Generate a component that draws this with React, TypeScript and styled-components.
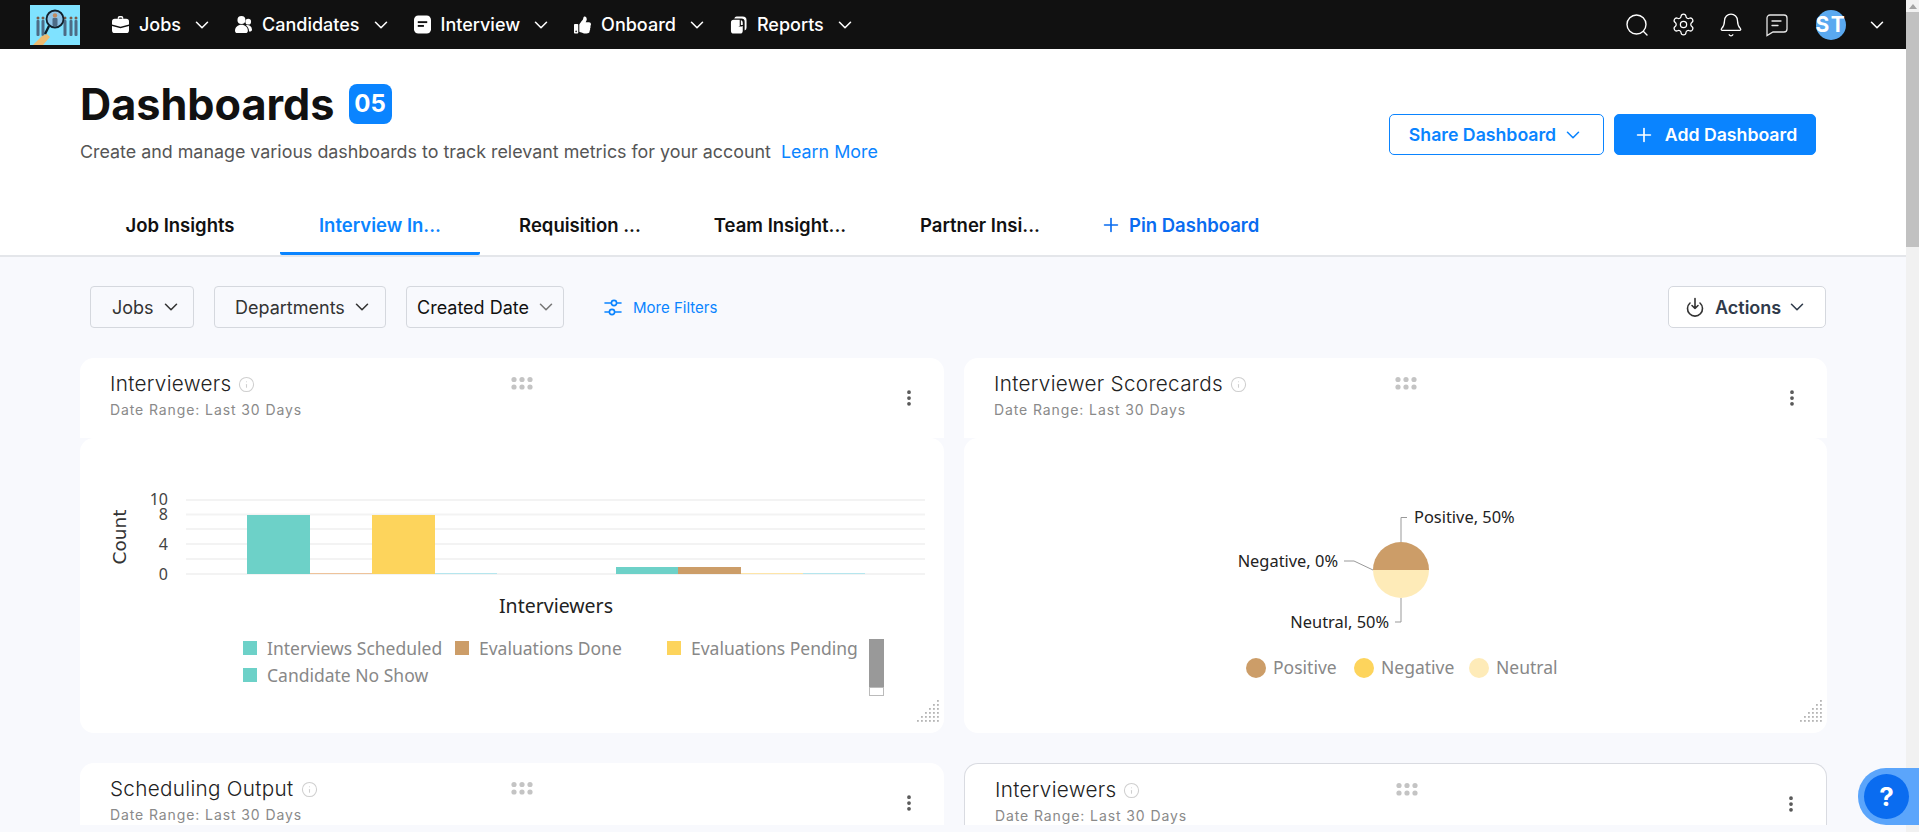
import React from "react";
import styled, { createGlobalStyle } from "styled-components";
import { ChevronDown, Plus, Settings, Bell, Info, EllipsisVertical } from "lucide-react";
import { FaThumbsUp } from "react-icons/fa";

const GlobalStyle = createGlobalStyle`
  html, body {
    margin: 0;
    height: 100%;
    overflow: hidden;
    background: #f8f9fd;
    font-family: Inter, "Liberation Sans", sans-serif;
  }
  * { box-sizing: border-box; }
`;

const Shell = styled.div`
  display: flex;
  width: 1919px;
  height: 832px;
`;

const Main = styled.div`
  flex: 1;
  min-width: 0;
  height: 825px;
  overflow: hidden;
`;

const Scrollbar = styled.div`
  width: 13px;
  background: #f1f1f1;
  display: flex;
  flex-direction: column;
  align-items: center;
`;

const ScrollArrow = styled.div`
  width: 0;
  height: 0;
  margin: 4px 0 3px;
  border-left: 4px solid transparent;
  border-right: 4px solid transparent;
  border-bottom: 5px solid #a3a3a3;
`;

const ScrollThumb = styled.div`
  width: 100%;
  height: 235px;
  background: #c1c1c1;
`;

const TopBar = styled.header`
  height: 49px;
  background: #111111;
  display: flex;
  align-items: center;
  padding: 0 18px 0 30px;
  color: #fff;
`;

const Logo = styled.svg`
  width: 50px;
  height: 40px;
  margin-right: 32px;
  flex: none;
`;

const NavList = styled.nav`
  display: flex;
  align-items: center;
  gap: 22px;
`;

const NavItem = styled.div`
  display: flex;
  align-items: center;
  gap: 10px;
  font-size: 18px;
  font-weight: 500;
`;

const NavChevron = styled(ChevronDown)`
  width: 22px;
  height: 22px;
  stroke-width: 1.7;
`;

const NavIcon = styled.span`
  width: 17px;
  height: 20px;
  display: flex;
  align-items: center;
  justify-content: center;
`;

const TopActions = styled.div`
  margin-left: auto;
  display: flex;
  align-items: center;
  gap: 22px;
`;

const Avatar = styled.div`
  width: 30px;
  height: 30px;
  border-radius: 50%;
  background: #5aa9f0;
  display: flex;
  align-items: center;
  justify-content: center;
  font-size: 21px;
  font-weight: 700;
  letter-spacing: 1.5px;
  margin: 0 -2px 0 6px;
`;

const Heading = styled.section`
  background: #fff;
  height: 208px;
  display: flex;
  flex-direction: column;
  border-bottom: 2px solid #e4e6ea;
`;

const HeadingRow = styled.div`
  display: flex;
  justify-content: space-between;
  align-items: center;
  height: 143px;
  padding: 0 90px 0 80px;
`;

const TitleRow = styled.div`
  display: flex;
  align-items: center;
  gap: 14px;
`;

const Title = styled.h1`
  margin: 0;
  font-size: 43.2px;
  line-height: 50px;
  font-weight: 700;
  color: #111;
`;

const CountBadge = styled.span`
  width: 43px;
  height: 40px;
  border-radius: 8px;
  background: #0a84ff;
  color: #fff;
  display: flex;
  align-items: center;
  justify-content: center;
  font-size: 24px;
  font-weight: 700;
`;

const Subtitle = styled.p`
  margin: 12px 0 0;
  font-size: 17.87px;
  line-height: 22px;
  color: #555;
`;

const BlueLink = styled.a`
  color: #0a84ff;
  margin-left: 10px;
`;

const ButtonRow = styled.div`
  display: flex;
  gap: 10px;
  margin-top: 28px;
`;

const Button = styled.button<{ $solid?: boolean; $w: number }>`
  width: ${(p) => p.$w}px;
  height: 41px;
  border-radius: 5px;
  border: 1px solid #0a84ff;
  background: ${(p) => (p.$solid ? "#0a84ff" : "#fff")};
  color: ${(p) => (p.$solid ? "#fff" : "#0a84ff")};
  font-family: inherit;
  font-size: 17.7px;
  font-weight: 600;
  display: flex;
  align-items: center;
  justify-content: center;
  gap: ${(p) => (p.$solid ? "10px" : "6px")};
  padding: 0;
`;

const Tabs = styled.div`
  display: flex;
  align-items: stretch;
  height: 63px;
  padding-left: 80px;
`;

const Tab = styled.div<{ $active?: boolean }>`
  width: 200px;
  padding-top: 6px;
  display: flex;
  align-items: center;
  justify-content: center;
  font-size: 18.5px;
  font-weight: 600;
  color: ${(p) => (p.$active ? "#0a84ff" : "#111")};
  border-bottom: 3px solid ${(p) => (p.$active ? "#0a84ff" : "transparent")};
  border-radius: 0 0 2px 2px;
`;

const PinTab = styled.div`
  display: flex;
  align-items: center;
  gap: 7px;
  padding: 3px 0 0;
  margin-left: 20px;
  font-size: 18.5px;
  font-weight: 600;
  color: #0a6cf0;
`;

const Filters = styled.div`
  display: flex;
  align-items: center;
  height: 42px;
  margin: 29px 80px 30px 90px;
  gap: 20px;
`;

const FilterButton = styled.div<{ $w: number; $pad: number; $dark?: boolean }>`
  width: ${(p) => p.$w}px;
  height: 42px;
  display: flex;
  align-items: center;
  gap: 6px;
  padding-left: ${(p) => p.$pad}px;
  border: 1px solid #d5d8de;
  border-radius: 4px;
  font-size: 18px;
  color: ${(p) => (p.$dark ? "#111" : "#333")};
`;

const MoreFilters = styled.div`
  display: flex;
  align-items: center;
  gap: 11px;
  margin-left: 20px;
  font-size: 15px;
  color: #0a84ff;
`;

const ActionsButton = styled.div`
  margin-left: auto;
  width: 158px;
  height: 42px;
  display: flex;
  align-items: center;
  gap: 5px;
  padding-left: 16px;
  background: #fff;
  border: 1px solid #d5d8de;
  border-radius: 5px;
  font-size: 18px;
  font-weight: 600;
  color: #2f3a4a;
`;

const ActionsGlyph = styled.svg`
  width: 20px;
  height: 20px;
  margin-right: 5px;
`;

const Grid = styled.div`
  display: grid;
  grid-template-columns: 864px 863px;
  column-gap: 20px;
  row-gap: 30px;
  padding-left: 80px;
`;

const Widget = styled.div`
  display: flex;
  flex-direction: column;
`;

const CardHead = styled.div<{ $outlined?: boolean }>`
  position: relative;
  height: 80px;
  background: #fff;
  border-radius: 14px 14px 0 0;
  padding: 13px 30px 0;
  border: ${(p) => (p.$outlined ? "1px solid #d9dbe1" : "none")};
  border-bottom: none;
`;

const CardTitle = styled.div`
  display: flex;
  align-items: center;
  gap: 7px;
  font-size: 20.7px;
  font-weight: 300;
  letter-spacing: 0.3px;
  line-height: 26px;
  color: #222;
`;

const InfoIcon = styled(Info)`
  width: 17px;
  height: 17px;
  color: #cfcfcf;
`;

const CardDate = styled.div`
  margin-top: 2px;
  font-size: 14px;
  line-height: 22px;
  letter-spacing: 0.9px;
  color: #8a8a8a;
`;

const DragDots = styled.svg`
  position: absolute;
  top: 18px;
  left: 431px;
  width: 22px;
  height: 16px;
`;

const MoreButton = styled(EllipsisVertical)`
  position: absolute;
  top: 30px;
  right: 25px;
  width: 20px;
  height: 20px;
  color: #555;
`;

const CardBody = styled.div`
  position: relative;
  height: 295px;
  background: #fff;
  border-radius: 14px;
`;

const ChartSvg = styled.svg`
  display: block;
  width: 100%;
  height: 100%;
`;

const ResizeDots = styled.svg`
  position: absolute;
  right: 4px;
  bottom: 10px;
  width: 25px;
  height: 25px;
`;

const HelpBubble = styled.div`
  position: fixed;
  left: 1858px;
  top: 768px;
  width: 61px;
  height: 57px;
  background: #5ba5fb;
  border-radius: 28px 0 0 28px;
  display: flex;
  align-items: center;
  padding-left: 6px;
`;

const HelpDot = styled.div`
  width: 45px;
  height: 45px;
  border-radius: 50%;
  background: #0a6cf0;
  color: #fff;
  font-size: 26px;
  font-weight: 700;
  display: flex;
  align-items: center;
  justify-content: center;
`;

const noto = '"Noto Sans", sans-serif';

const IconJobs = () => (
  <svg width="17" height="19" viewBox="0 0 18 20" fill="#fff">
    <path d="M6 4V3a2 2 0 0 1 2-2h2a2 2 0 0 1 2 2v1h-1.5V3a.5.5 0 0 0-.5-.5H8a.5.5 0 0 0-.5.5v1z" />
    <path d="M3 4h12a3 3 0 0 1 3 3v3L9 12.5 0 10V7a3 3 0 0 1 3-3z" />
    <path d="M0 11.5 9 14l9-2.5V16a3 3 0 0 1-3 3H3a3 3 0 0 1-3-3z" />
  </svg>
);

const IconCandidates = () => (
  <svg width="18" height="19" viewBox="0 0 18 19" fill="#fff">
    <circle cx="6.8" cy="4.8" r="4.2" />
    <path d="M0 16c0-3.6 3-6.2 6.8-6.2s6.8 2.6 6.8 6.2c0 1.6-1 2.6-2.4 2.6H2.4C1 18.6 0 17.6 0 16z" />
    <circle cx="14" cy="6.5" r="3" />
    <path d="M11.5 10.3a5 5 0 0 1 6.5 4.4c0 1.4-.8 2.3-2.6 2.3h-.5c0-2.6-1.2-5-3.4-6.7z" />
  </svg>
);

const IconInterview = () => (
  <svg width="17" height="19" viewBox="0 0 18 20">
    <rect x="0" y="0.5" width="18" height="19" rx="4.5" fill="#fff" />
    <rect x="4" y="6.5" width="10" height="2" fill="#111" />
    <rect x="4" y="10.5" width="6.5" height="2" fill="#111" />
  </svg>
);

const IconReports = () => (
  <svg width="18" height="20" viewBox="0 0 18 20" fill="#fff">
    <path d="M7 1h6.5A4 4 0 0 1 17.5 5v8a3 3 0 0 1-2 2.8V6.5A3.5 3.5 0 0 0 12 3H4.5A3 3 0 0 1 7 1z" />
    <path d="M4 4.5h6.3V11h-1.500a5 5 0 0 0 4.700 0v5a3 3 0 0 1-3 3H4a3 3 0 0 1-3-3V7.500a3 3 0 0 1 3-3z" />
    <path d="M11.5 4.6A3 3 0 0 1 13.5 7.5V10h-2z" />
  </svg>
);

const IconSearch = () => (
  <svg width="24" height="24" viewBox="0 0 24 24" fill="none" stroke="#fff" strokeWidth="1.4">
    <circle cx="11.5" cy="11.5" r="9.5" />
    <path d="M18.5 18.5 22 22" strokeLinecap="round" />
  </svg>
);

const IconChat = () => (
  <svg width="22" height="24" viewBox="0 0 22 24" fill="none" stroke="#e6e6e6" strokeWidth="1.3">
    <path d="M4 2h14a3 3 0 0 1 3 3v11a3 3 0 0 1-3 3H7l-6 3.5V5a3 3 0 0 1 3-3z" />
    <path d="M6 8h9M6 12.5h6" strokeLinecap="round" />
  </svg>
);

const IconFilters = () => (
  <svg width="18" height="17" viewBox="0 0 18 17" fill="none" stroke="#0a84ff" strokeWidth="1.6">
    <path d="M1 4h6M13 4h4M1 13h4M11 13h6" strokeLinecap="round" />
    <circle cx="10" cy="4" r="2.6" />
    <circle cx="8" cy="13" r="2.6" />
  </svg>
);

const IconActions = () => (
  <ActionsGlyph viewBox="0 0 20 20" fill="none" stroke="#333" strokeWidth="1.6" strokeLinecap="round" strokeLinejoin="round">
    <path d="M5 6a7.5 7.5 0 1 0 10 0" />
    <path d="M10 1.5v10M7 8.5l3 3 3-3" />
  </ActionsGlyph>
);

const drag = (
  <DragDots viewBox="0 0 22 16" fill="#c4c4c4">
    {[3, 11, 19].map((x) => (
      <React.Fragment key={x}>
        <circle cx={x} cy="3.5" r="2.6" />
        <circle cx={x} cy="11" r="2.6" />
      </React.Fragment>
    ))}
  </DragDots>
);

const resize = (
  <ResizeDots viewBox="0 0 25 25" fill="#b5b5b5">
    {[0, 1, 2, 3, 4, 5].flatMap((row) =>
      [0, 1, 2, 3, 4, 5].map((col) =>
        col + row >= 5 ? <rect key={`${row}-${col}`} x={col * 4 + 2} y={row * 4 + 2} width="1.8" height="1.8" /> : null,
      ),
    )}
  </ResizeDots>
);

function BarChart() {
  // coordinates inside the 864x295 card body
  const toX = (x: number) => x - 80;
  const toY = (y: number) => y - 438;
  const grid = [500, 514.5, 529, 544, 559, 574];
  const labels: [string, number][] = [["10", 499], ["8", 514], ["4", 544], ["0", 574]];
  const bars = [
    [247, 310, 515, "#6dd1c8"],
    [310, 372, 573, "#eec39a"],
    [372, 435, 515, "#fdd45c"],
    [435, 497, 573, "#b5e6ee"],
    [616, 678, 567, "#6dd1c8"],
    [678, 741, 567, "#cc9d68"],
    [741, 803, 573, "#fee5a8"],
    [803, 865, 573, "#b5e6ee"],
  ] as const;
  const legend = [
    [243, 648, "#6dd1c8", "Interviews Scheduled"],
    [455, 648, "#cc9d68", "Evaluations Done"],
    [667, 648, "#fdd45c", "Evaluations Pending"],
    [243, 675, "#6dd1c8", "Candidate No Show"],
  ] as const;
  return (
    <ChartSvg viewBox="0 0 864 295">
      {grid.map((y) => (
        <rect key={y} x={toX(186)} y={toY(y) - 1} width="739" height="2" fill="#f3f3f3" />
      ))}
      {labels.map(([t, y]) => (
        <text key={t} x={toX(168)} y={toY(y) + 6} textAnchor="end" fontFamily={noto} fontSize="16" fill="#444">
          {t}
        </text>
      ))}
      <text
        transform={`translate(${toX(126)} ${toY(537)}) rotate(-90)`}
        textAnchor="middle"
        fontFamily='"DejaVu Sans", sans-serif'
        fontSize="18.5"
        fill="#333"
      >
        Count
      </text>
      {bars.map(([a, b, top, fill], i) => (
        <rect key={i} x={toX(a)} y={toY(top)} width={b - a} height={574 - top} fill={fill} />
      ))}
      <text x={toX(556)} y={toY(613)} textAnchor="middle" fontFamily={noto} fontSize="19.5" fill="#222">
        Interviewers
      </text>
      {legend.map(([x, y, fill, t]) => (
        <React.Fragment key={t}>
          <rect x={toX(x)} y={toY(y) - 7} width="14" height="14" fill={fill} />
          <text x={toX(x) + 24} y={toY(y) + 7} fontFamily={noto} fontSize="17.5" fill="#888">
            {t}
          </text>
        </React.Fragment>
      ))}
      <rect x={toX(869)} y={toY(639)} width="15" height="57" fill="#999" />
      <rect x={toX(869.5)} y={toY(687.5)} width="14" height="8" fill="#fff" stroke="#bbb" />
    </ChartSvg>
  );
}

function PieChart() {
  const toX = (x: number) => x - 964;
  const toY = (y: number) => y - 438;
  const cx = toX(1401);
  const cy = toY(570);
  const legend = [
    [1256, "#cc9d68", "Positive"],
    [1364, "#fdd45c", "Negative"],
    [1479, "#feebb8", "Neutral"],
  ] as const;
  return (
    <ChartSvg viewBox="0 0 863 295">
      <path d={`M${cx - 28} ${cy}a28 28 0 0 1 56 0z`} fill="#cc9d68" />
      <path d={`M${cx - 28} ${cy}a28 28 0 0 0 56 0z`} fill="#feebb8" />
      <g fill="none" stroke="#999" strokeWidth="1">
        <path d={`M${cx} ${cy - 28}V${toY(517.5)}h6`} />
        <path d={`M${cx} ${cy + 28}V${toY(622)}h-6`} />
        <path d={`M${toX(1344)} ${toY(561)}h10L${cx - 28} ${cy}`} />
      </g>
      <g fontFamily={noto} fontSize="16.4" fill="#222">
        <text x={toX(1414)} y={toY(523)}>Positive, 50%</text>
        <text x={toX(1338)} y={toY(567)} textAnchor="end">Negative, 0%</text>
        <text x={toX(1389)} y={toY(628)} textAnchor="end">Neutral, 50%</text>
      </g>
      {legend.map(([x, fill, t]) => (
        <React.Fragment key={t}>
          <circle cx={toX(x)} cy={toY(668)} r="10" fill={fill} />
          <text x={toX(x) + 17} y={toY(674)} fontFamily={noto} fontSize="17.5" fill="#888">
            {t}
          </text>
        </React.Fragment>
      ))}
    </ChartSvg>
  );
}

function WidgetHead({ title, outlined }: { title: string; outlined?: boolean }) {
  return (
    <CardHead $outlined={outlined}>
      <CardTitle>
        {title}
        <InfoIcon strokeWidth={1.5} />
      </CardTitle>
      <CardDate>Date Range: Last 30 Days</CardDate>
      {drag}
      <MoreButton strokeWidth={2.5} />
    </CardHead>
  );
}

export default function App() {
  return (
    <Shell>
      <GlobalStyle />
      <Main>
        <TopBar>
          <Logo viewBox="0 0 50 40">
            <rect width="50" height="40" fill="#7fe2ff" />
            {[8, 13, 35, 41, 46].map((x) => (
              <g key={x}>
                <circle cx={x} cy="13" r="1.5" fill="#7a5a48" />
                <rect x={x - 1.5} y="15" width="3" height="16" rx="1" fill="#4d6b86" />
              </g>
            ))}
            <path d="M3 40 12 31l5-2 3 3-7 8z" fill="#eebb70" />
            <circle cx="25" cy="14" r="8.5" fill="#8fc4e6" stroke="#10202c" strokeWidth="1.8" />
            <circle cx="25" cy="10.5" r="2.2" fill="#c08a60" />
            <rect x="22.5" y="13" width="5" height="8" rx="1" fill="#4d6b86" />
            <path d="M19 21 15 29" stroke="#10202c" strokeWidth="2.4" />
          </Logo>
          <NavList>
            <NavItem><NavIcon><IconJobs /></NavIcon>Jobs<NavChevron /></NavItem>
            <NavItem><NavIcon><IconCandidates /></NavIcon>Candidates<NavChevron /></NavItem>
            <NavItem><NavIcon><IconInterview /></NavIcon>Interview<NavChevron /></NavItem>
            <NavItem><NavIcon><FaThumbsUp size={18} /></NavIcon>Onboard<NavChevron /></NavItem>
            <NavItem><NavIcon><IconReports /></NavIcon>Reports<NavChevron /></NavItem>
          </NavList>
          <TopActions>
            <IconSearch />
            <Settings size={25} strokeWidth={1.2} />
            <Bell size={26} strokeWidth={1.2} />
            <IconChat />
            <Avatar>ST</Avatar>
            <NavChevron />
          </TopActions>
        </TopBar>
        <Heading>
          <HeadingRow>
            <div>
              <TitleRow>
                <Title>Dashboards</Title>
                <CountBadge>05</CountBadge>
              </TitleRow>
              <Subtitle>
                Create and manage various dashboards to track relevant metrics for your account
                <BlueLink>Learn More</BlueLink>
              </Subtitle>
            </div>
            <ButtonRow>
              <Button $w={215}>Share Dashboard<ChevronDown size={22} strokeWidth={1.7} /></Button>
              <Button $solid $w={202}><Plus size={22} strokeWidth={1.8} />Add Dashboard</Button>
            </ButtonRow>
          </HeadingRow>
          <Tabs>
            <Tab>Job Insights</Tab>
            <Tab $active>Interview In...</Tab>
            <Tab>Requisition ...</Tab>
            <Tab>Team Insight...</Tab>
            <Tab>Partner Insi...</Tab>
            <PinTab><Plus size={22} strokeWidth={1.8} />Pin Dashboard</PinTab>
          </Tabs>
        </Heading>
        <Filters>
          <FilterButton $w={104} $pad={21}>Jobs<ChevronDown size={22} strokeWidth={1.7} /></FilterButton>
          <FilterButton $w={172} $pad={20}>Departments<ChevronDown size={22} strokeWidth={1.7} /></FilterButton>
          <FilterButton $w={158} $pad={10} $dark>Created Date<ChevronDown size={22} strokeWidth={1.7} color="#777" /></FilterButton>
          <MoreFilters><IconFilters />More Filters</MoreFilters>
          <ActionsButton><IconActions />Actions<ChevronDown size={22} strokeWidth={1.7} /></ActionsButton>
        </Filters>
        <Grid>
          <Widget>
            <WidgetHead title="Interviewers" />
            <CardBody><BarChart />{resize}</CardBody>
          </Widget>
          <Widget>
            <WidgetHead title="Interviewer Scorecards" />
            <CardBody><PieChart />{resize}</CardBody>
          </Widget>
          <Widget>
            <WidgetHead title="Scheduling Output" />
          </Widget>
          <Widget>
            <WidgetHead title="Interviewers" outlined />
          </Widget>
        </Grid>
      </Main>
      <Scrollbar>
        <ScrollArrow />
        <ScrollThumb />
      </Scrollbar>
      <HelpBubble><HelpDot>?</HelpDot></HelpBubble>
    </Shell>
  );
}
